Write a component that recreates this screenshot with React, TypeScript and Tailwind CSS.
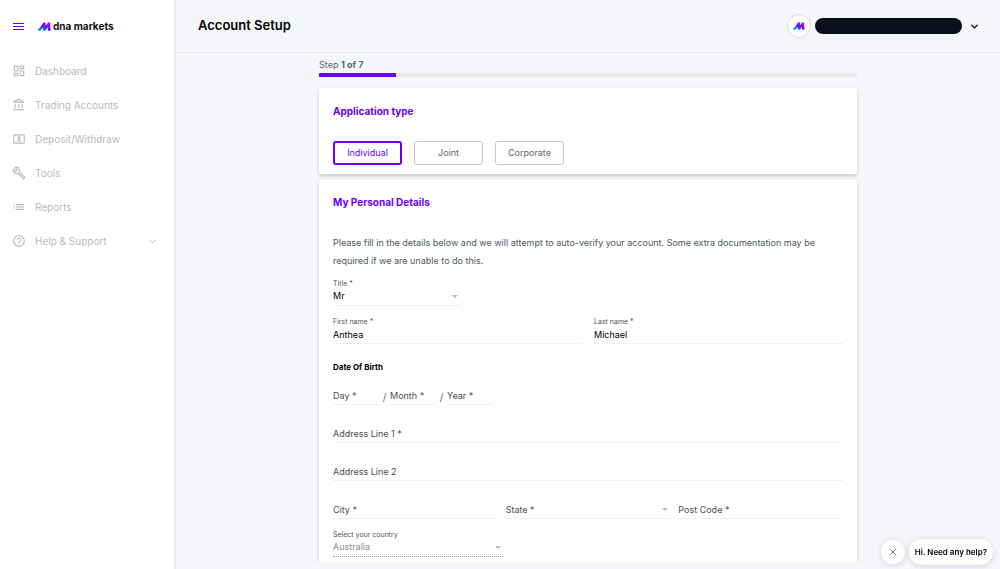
import { useId, useState } from 'react';
import type { ReactNode } from 'react';
import {
  MdHelpOutline,
  MdOutlineAccountBalance,
  MdOutlineBuild,
  MdOutlineDashboard,
  MdOutlineList,
  MdOutlineLocalAtm,
} from 'react-icons/md';
import { ChevronDown, X } from 'lucide-react';

const navItems = [
  { label: 'Dashboard', icon: MdOutlineDashboard },
  { label: 'Trading Accounts', icon: MdOutlineAccountBalance },
  { label: 'Deposit/Withdraw', icon: MdOutlineLocalAtm },
  { label: 'Tools', icon: MdOutlineBuild },
  { label: 'Reports', icon: MdOutlineList },
  { label: 'Help & Support', icon: MdHelpOutline, expandable: true },
];

const applicationTypes = ['Individual', 'Joint', 'Corporate'];

function LogoMark({ className }: { className?: string }) {
  const id = useId();
  return (
    <svg viewBox="0 0 26 18" className={className} fill="none" aria-hidden="true">
      <defs>
        <linearGradient id={id} x1="9" y1="18" x2="15" y2="1" gradientUnits="userSpaceOnUse">
          <stop offset="0" stopColor="#0a9cff" />
          <stop offset="0.4" stopColor="#3a30ff" />
          <stop offset="0.7" stopColor="#8a00ff" />
          <stop offset="1" stopColor="#d000f0" />
        </linearGradient>
      </defs>
      <path
        d="M2.500 15.500C6 15 9 7 13 3L12.500 15.500C15.500 13.500 18 7 22 3L22 11"
        stroke={`url(#${id})`}
        strokeWidth="5"
        strokeLinecap="round"
        strokeLinejoin="round"
      />
      <circle cx="22.500" cy="14.500" r="3" fill="#6a00ff" />
    </svg>
  );
}

function Caret() {
  return (
    <svg
      viewBox="0 0 6 3"
      className="pointer-events-none mr-[2px] mb-[2px] h-[3px] w-[6px] self-center justify-self-end fill-[#bdbdbd] [grid-area:1/1]"
      aria-hidden="true"
    >
      <path d="M0 0h6L3 3z" />
    </svg>
  );
}

type FieldProps = {
  label: string;
  value?: string;
  options?: string[];
  disabled?: boolean;
  className?: string;
};

function Field({ label, value = '', options, disabled, className = '' }: FieldProps) {
  const id = useId();
  const [current, setCurrent] = useState(value);
  const filled = current !== '';
  const control = `h-[18px] w-full min-w-0 appearance-none rounded-none border-b bg-transparent pb-px text-[9px] outline-none [grid-area:1/1] ${
    disabled ? 'border-dotted border-[#9a9a9a] text-[#8c8c8c] opacity-100' : 'border-[#f0f0f0] text-black'
  }`;

  return (
    <div className={className}>
      {filled && (
        <label htmlFor={id} className="block pt-px text-[7px] leading-[9px] text-[#555]">
          {label}
        </label>
      )}
      <div className={filled ? 'grid' : 'grid pt-[10px]'}>
        {/* Label rests on the input until there is a value */}
        {!filled && (
          <label
            htmlFor={id}
            className="pointer-events-none text-[9px] leading-[18px] whitespace-nowrap text-[#4d4d4d] [grid-area:1/1]"
          >
            {label}
          </label>
        )}
        {options ? (
          <>
            <select
              id={id}
              className={control}
              value={current}
              disabled={disabled}
              onChange={e => setCurrent(e.target.value)}
            >
              {options.map(o => (
                <option key={o} value={o}>{o}</option>
              ))}
            </select>
            <Caret />
          </>
        ) : (
          <input
            id={id}
            type="text"
            className={control}
            value={current}
            disabled={disabled}
            onChange={e => setCurrent(e.target.value)}
          />
        )}
      </div>
    </div>
  );
}

function Card({ title, className = '', children }: { title: string; className?: string; children: ReactNode }) {
  return (
    <section className={`bg-white px-[14px] shadow-[0_2px_4px_rgba(0,0,0,0.18)] ${className}`}>
      <h2 className="text-[10px] leading-4 font-bold text-[#6a00f9]">{title}</h2>
      {children}
    </section>
  );
}

function Sidebar() {
  return (
    <aside className="w-44 shrink-0 border-r-2 border-[#e9eaee] bg-white">
      <div className="flex h-[52px] items-center gap-[14px] pl-[13px]">
        <button type="button" aria-label="Toggle menu" className="flex w-[11px] flex-col gap-[2px]">
          <span className="h-px bg-[#6a00f9]" />
          <span className="h-px bg-[#6a00f9]" />
          <span className="h-px bg-[#6a00f9]" />
        </button>
        <a href="#" className="flex items-center gap-[2px]">
          <LogoMark className="h-[9px] w-[13px]" />
          <span className="text-[10px] leading-3 font-bold text-[#111]">dna markets</span>
        </a>
      </div>
      <nav className="pt-[2px]">
        {navItems.map(({ label, icon: Icon, expandable }) => (
          <a key={label} href="#" className="flex h-[34px] items-center pr-4 pl-3 text-[#b8bcc0]">
            <Icon className="size-[14px]" />
            <span className="ml-[9px] text-[10px]">{label}</span>
            {expandable && <ChevronDown className="ml-auto size-[11px]" />}
          </a>
        ))}
      </nav>
    </aside>
  );
}

function Header() {
  return (
    <header className="flex h-[53px] items-center justify-between border-b border-[#e8e9ed] pr-5 pl-[22px]">
      <h1 className="text-[13px] font-semibold text-black">Account Setup</h1>
      <button type="button" aria-label="Account menu" className="flex items-center">
        <span className="flex size-6 items-center justify-center rounded-full border border-[#d9d9df] bg-white">
          <LogoMark className="h-[8px] w-[12px]" />
        </span>
        <span className="ml-1 h-4 w-[147px] rounded-full bg-[#0b0f1c]" />
        <ChevronDown className="ml-[7px] size-[11px] text-black" strokeWidth={3} />
      </button>
    </header>
  );
}

export default function App() {
  const [type, setType] = useState('Individual');

  return (
    <div className="flex min-h-screen bg-[#f5f6fa] font-['Inter','Liberation_Sans',sans-serif]">
      <Sidebar />
      <div className="min-w-0 flex-1">
        <Header />
        <main className="mx-auto max-w-[538px] pt-1 pb-[7px]">
          <p className="text-[9px] leading-4 text-[#5b6670]">
            Step <strong className="font-bold">1 of 7</strong>
          </p>
          <div
            role="progressbar"
            aria-label="Application progress"
            aria-valuemin={0}
            aria-valuemax={7}
            aria-valuenow={1}
            className="h-1 bg-[#e9e9e9]"
          >
            <div className="h-full w-1/7 bg-[#6a00f9]" />
          </div>

          <Card title="Application type" className="mt-[11px] rounded-[2px] pt-[15px] pb-[9px]">
            <div className="mt-[22px] flex gap-3">
              {applicationTypes.map(t => (
                <button
                  key={t}
                  type="button"
                  aria-pressed={t === type}
                  onClick={() => setType(t)}
                  className={`h-6 w-[69px] rounded-[3px] text-[9px] ${
                    t === type
                      ? 'border-2 border-[#6a00f9] text-[#6a00f9]'
                      : 'border border-[#c4c6c9] text-[#5b6670]'
                  }`}
                >
                  {t}
                </button>
              ))}
            </div>
          </Card>

          <Card
            title="My Personal Details"
            className="mt-[6px] rounded-t-[2px] pt-[14px] pb-[5px] [clip-path:inset(-4px_-4px_0_-4px)]"
          >
            <p className="mt-6 text-[9px] leading-[18px] text-[#4b5865]">
              Please fill in the details below and we will attempt to auto-verify your account. Some extra
              documentation may be required if we are unable to do this.
            </p>
            <Field
              label="Title *"
              value="Mr"
              options={['Mr', 'Mrs', 'Ms', 'Miss', 'Dr']}
              className="mt-2 w-[127px]"
            />
            <div className="mt-[10px] grid grid-cols-2 gap-3">
              <Field label="First name *" value="Anthea" />
              <Field label="Last name *" value="Michael" />
            </div>

            <fieldset>
              <legend className="pt-4 text-[8px] leading-[14px] font-bold text-black">Date Of Birth</legend>
              <div className="mt-[3px] flex items-end">
                <Field label="Day *" className="w-[46px]" />
                <span className="w-[11px] text-center text-[10px] leading-4 text-[#5b6670]">/</span>
                <Field label="Month *" className="w-[46px]" />
                <span className="w-[11px] text-center text-[10px] leading-4 text-[#5b6670]">/</span>
                <Field label="Year *" className="w-[46px]" />
              </div>
            </fieldset>

            <div className="mt-[10px] space-y-[10px]">
              <Field label="Address Line 1 *" />
              <Field label="Address Line 2" />
              <div className="grid grid-cols-3 gap-2">
                <Field label="City *" />
                <Field label="State *" options={['', 'NSW', 'QLD', 'SA', 'TAS', 'VIC', 'WA']} />
                <Field label="Post Code *" />
              </div>
              <Field
                label="Select your country"
                value="Australia"
                options={['Australia']}
                disabled
                className="w-[170px]"
              />
            </div>
          </Card>
        </main>
      </div>

      {/* Chat launcher */}
      <div className="fixed right-[7px] bottom-1 flex items-center gap-1">
        <button
          type="button"
          aria-label="Dismiss"
          className="flex size-6 items-center justify-center rounded-full bg-white text-[#555] shadow-[0_1px_6px_rgba(60,80,110,0.2)]"
        >
          <X className="size-[10px]" />
        </button>
        <button
          type="button"
          className="h-[26px] rounded-full bg-white px-[6px] text-[8px] font-semibold text-black shadow-[0_1px_6px_rgba(60,80,110,0.2)]"
        >
          Hi. Need any help?
        </button>
      </div>
    </div>
  );
}
